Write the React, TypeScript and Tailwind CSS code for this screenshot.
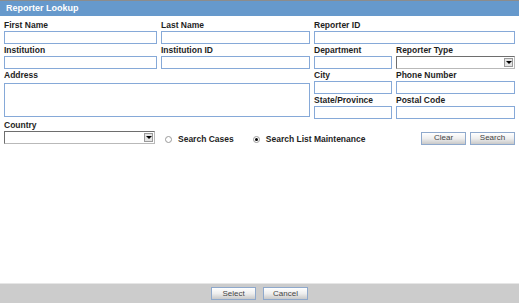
const Label = ({ children, className = "" }: { children?: React.ReactNode; className?: string }) => (
  <div className={`h-[12px] whitespace-nowrap text-[8.5px] font-bold leading-[12px] text-[#1e1e1e] ${className}`}>
    {children}
  </div>
);

const TextBox = ({ className = "" }: { className?: string }) => (
  <input type="text" className={`block h-[13px] w-full border border-[#86a9d8] bg-white outline-none ${className}`} />
);

const Combo = ({ className = "" }: { className?: string }) => (
  <div className={`flex h-[13px] items-center border border-t-[#6e6e6e] border-l-[#6e6e6e] border-r-[#b9b9b9] border-b-[#b9b9b9] bg-white ${className}`}>
    <div className="flex-1" />
    <div className="mr-[1px] flex h-[9px] w-[9px] flex-col items-center justify-center border border-[#9a9a9a] bg-[#e4e4e4]">
      <div className="h-0 w-0 border-x-[3px] border-t-[3px] border-x-transparent border-t-black" />
    </div>
  </div>
);

const Radio = ({ checked, label }: { checked?: boolean; label: string }) => (
  <label className="flex items-center gap-[6px]">
    <span className="flex h-[7px] w-[7px] items-center justify-center rounded-full border border-[#9a9a9a] bg-white">
      {checked && <span className="h-[3px] w-[3px] rounded-full bg-black" />}
    </span>
    <span className="text-[8.5px] font-bold leading-none text-[#1e1e1e]">{label}</span>
  </label>
);

const Btn = ({ label }: { label: string }) => (
  <button className="flex h-[13px] w-[45px] items-center justify-center border border-[#8fa9cc] bg-linear-to-b from-white via-[#eeeeee] to-[#c9c9c9] text-[8px] leading-none text-[#444]">
    {label}
  </button>
);

export default function App() {
  return (
    <div className="flex h-[303px] w-[519px] flex-col bg-white font-['Liberation_Sans',Arial,sans-serif]">
      <div className="flex h-[16px] items-center border-t border-[#8c8c8c] bg-[#6699cc] px-[6px]">
        <span className="text-[9px] font-bold leading-none text-white">Reporter Lookup</span>
      </div>

      <div className="flex-1 pt-[3px]">
        <div className="grid grid-cols-[153px_149px_78px_119px] grid-rows-[12px_13px_12px_13px_12px_13px_12px_13px_12px_13px] gap-x-[4px] px-[4px]">
          <Label>First Name</Label>
          <Label>Last Name</Label>
          <Label className="col-span-2">Reporter ID</Label>
          <TextBox />
          <TextBox />
          <TextBox className="col-span-2" />

          <Label>Institution</Label>
          <Label>Institution ID</Label>
          <Label>Department</Label>
          <Label>Reporter Type</Label>
          <TextBox />
          <TextBox />
          <TextBox />
          <Combo />

          <Label className="col-span-2">Address</Label>
          <Label>City</Label>
          <Label>Phone Number</Label>
          <textarea className="col-span-2 row-span-3 my-[2px] block h-[34px] resize-none border border-[#86a9d8] bg-white outline-none" />
          <TextBox />
          <TextBox />
          <Label>State/Province</Label>
          <Label>Postal Code</Label>
          <TextBox />
          <TextBox />

          <Label className="col-span-4">Country</Label>
          <Combo className="w-[151px]" />
          <div className="col-span-3 flex items-center">
            <div className="flex gap-[19px] pl-[4px] pt-[3px]">
              <Radio label="Search Cases" />
              <Radio checked label="Search List Maintenance" />
            </div>
            <div className="ml-auto flex gap-[4px] pt-[1px]">
              <Btn label="Clear" />
              <Btn label="Search" />
            </div>
          </div>
        </div>
      </div>

      <div className="flex h-[20px] justify-center gap-[7px] border-t border-[#e6e6e6] bg-[#cccccc] pt-[3px]">
        <Btn label="Select" />
        <Btn label="Cancel" />
      </div>
    </div>
  );
}
